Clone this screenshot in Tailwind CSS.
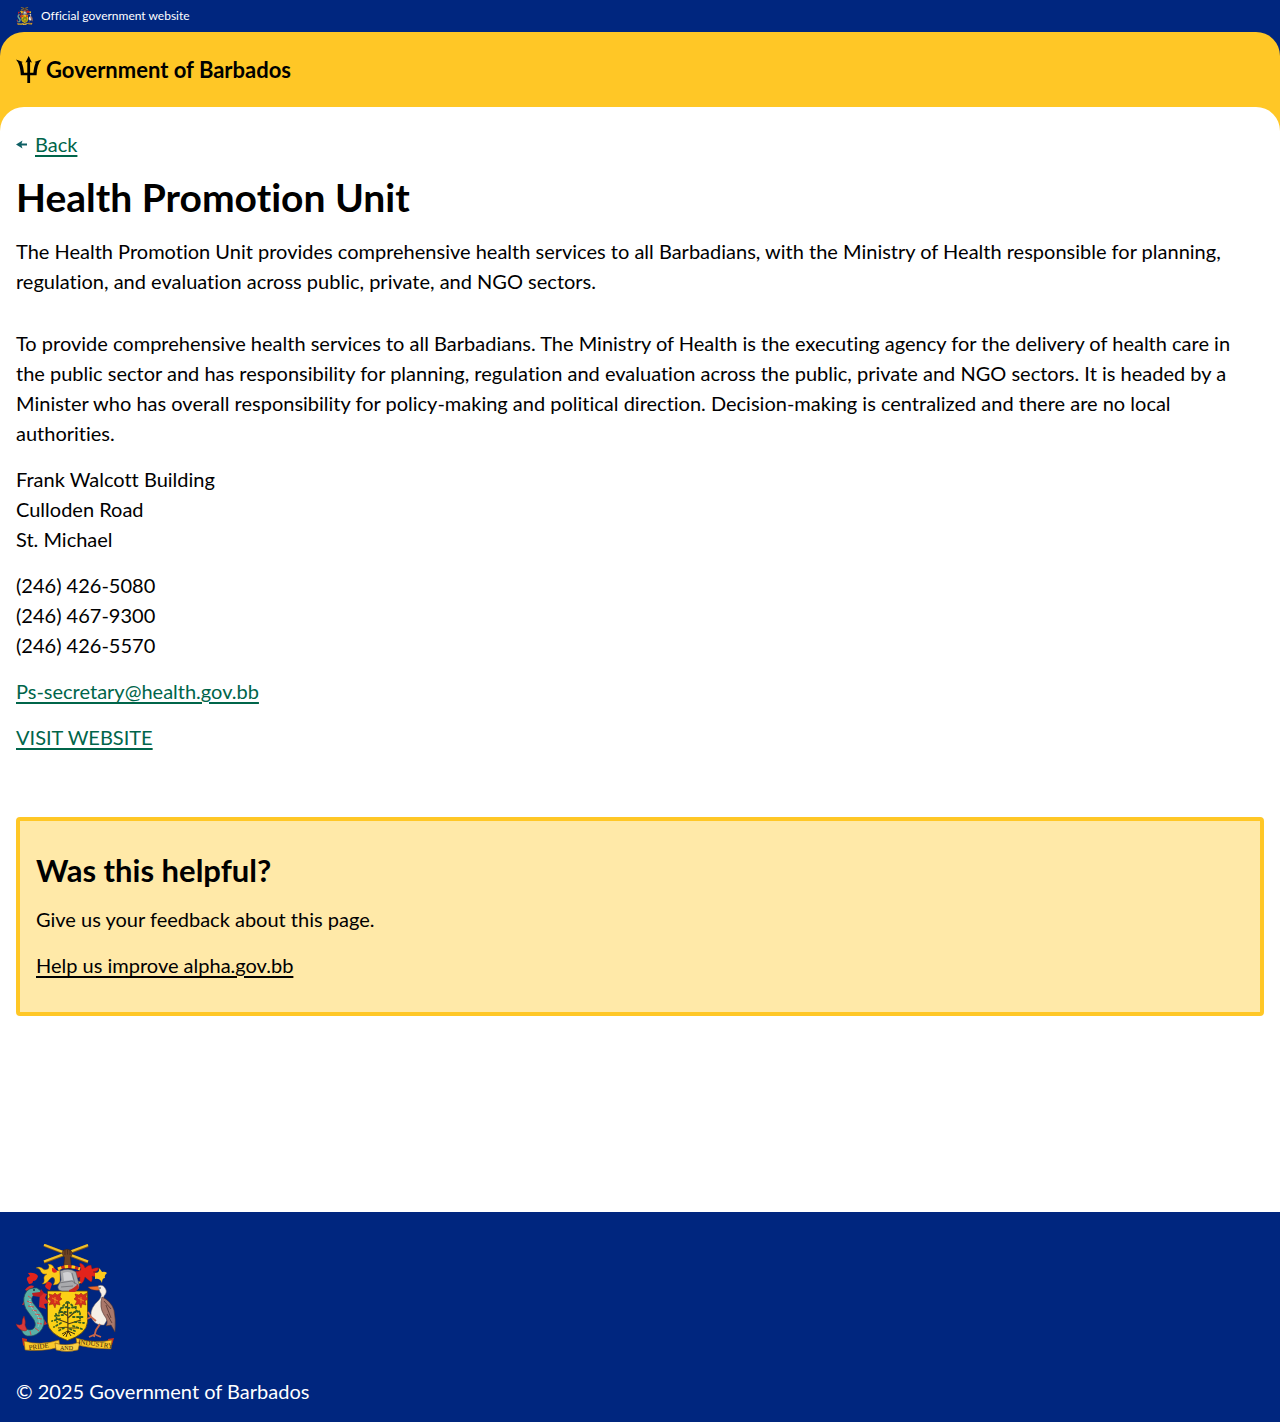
<!DOCTYPE html>
<html lang="en">
<head>
<meta charset="utf-8">
<meta name="viewport" content="width=device-width, initial-scale=1">
<title>Health Promotion Unit - Government of Barbados</title>
<script src="https://cdn.jsdelivr.net/npm/@tailwindcss/browser@4"></script>
</head>
<body class="flex min-h-screen flex-col bg-white font-[Lato,sans-serif] text-xl leading-[30px] text-black [font-variant-ligatures:none]">

<!-- Coat of arms, shared by the top bar and the footer -->
<svg class="hidden" aria-hidden="true">
  <symbol id="crest" viewBox="0 0 100 108">
    <!-- crossed cane and arm -->
    <path d="M28 18 72 1.500M28 1 72 18" stroke="#8a5a12" stroke-width="3"/>
    <path d="M28 17.500 72 1M28 .8 72 17.500" stroke="#eec02c" stroke-width="2"/>
    <path d="M47 6.500q4-3 8 0l1.500 3-2 4 1 11h-8l1-11-2.500-4z" fill="#6b4226" stroke="#2e1a10" stroke-width=".5"/>
    <path d="M49 6v5M51.500 5.500v5M54 6v5" stroke="#3b2114" stroke-width=".6"/>
    <!-- mantling -->
    <path d="M44 26q-4 2-6-2-1-4-6-4 2 3 0 5-4 2-6-1-3-2-6 0 4 0 5 4 2 3 6 2-4 2-3 5 1 3-2 5 5 0 7-4 3-4 5-2 2 3-1 7 5 0 7-3z" fill="#fcca1b" stroke="#8c5a0a" stroke-width=".4"/>
    <path d="M22 32q-3-4-10-3l2 3q-4 1-3 4l2 4q4 0 4-3 4 0 5-5z" fill="#e2231c"/>
    <path d="M31 38q3-1 5 2l-2 6q-4-1-5-4zM36 24q4 0 5 4-4 2-5-1z" fill="#e2231c"/>
    <path d="M60 27q5 1 5-3-2-3-1-5 4 1 5 5 3-3 6-3l1 4q5-2 7-1-1 4-6 4 5 0 6 4-4 1-7 0 1 4-1 6-4-3-6-5-1 5-4 7-2-3-1-7-3 2-5 0z" fill="#e2231c" stroke="#86160f" stroke-width=".4"/>
    <path d="M79 29q5 0 4-5 2 2 3 4 3-1 5 1-3 2-2 5-3 0-3 5-2-5-7-4z" fill="#fcca1b"/>
    <path d="M58 33q3 0 4 4l3 1-4 4-4-3z" fill="#fcca1b"/>
    <!-- shield -->
    <path d="M31.500 47h40v31q-1 12-20 18.500-19-6.500-20-18.500z" fill="#fcd116" stroke="#5a430b" stroke-width=".8"/>
    <!-- helmet and wreath -->
    <path d="M44 27q9-4 16 1l3 12q1 6-6 7H46q-5-1-4-5l3-6z" fill="#a9aaad" stroke="#4c4c50" stroke-width=".6"/>
    <path d="M47 29q5-2 8 0l2 7-9 1z" fill="#d0d1d3"/>
    <path d="m43 39 13-2 6 4M45 43l12-1M56 29l3 11" fill="none" stroke="#66666b" stroke-width=".7"/>
    <path d="M53 46q4-1 9-6l1 4-4 4h-6z" fill="#c82a20"/>
    <path d="M42 25q10-5 22 0" fill="none" stroke="#c9281d" stroke-width="3"/>
    <path d="M42 25q10-5 22 0" fill="none" stroke="#fcd116" stroke-width="3" stroke-dasharray="3.500 3.500"/>
    <!-- pride of Barbados flowers -->
    <g id="flower">
      <path d="m33 50 4 1 2-2 2 2 4-2-1 4 2 2-3 2 1 4-4-1-1 4-2-4-4 1 2-4-3-2 2-2z" fill="#d5301d" stroke="#7f190f" stroke-width=".4"/>
      <path d="M39 53v6M36 54l6 3" stroke="#f6a723" stroke-width=".7"/>
    </g>
    <use href="#flower" x="26"/>
    <!-- bearded fig tree -->
    <path d="M51.500 58 52 89M52 72l-9-6M52 74l9-8M52 79l-11-4M52 80l13-4M52 83l-10 1M52 84l11 0" fill="none" stroke="#4b3a16" stroke-width="1.200"/>
    <path d="m51 58-4 4M52 58l5 4M51 63l-6 1M52 64l8-1M50 68l-8 0M54 69l11-2M47 71l-8 1M57 73l10 0M44 75l-8 2M59 78l9 1M45 79l-7 4M57 82l9 3M48 84l-6 3M54 85l5 2M45 64l-2 5M59 63l3 6M40 70l1 8M64 69l0 8" fill="none" stroke="#365f21" stroke-width="1.800" stroke-linecap="round" stroke-dasharray="1.500 2.500"/>
    <path d="m52 87-6 3M52 87l-2 6M52 87l3 5M52 87l7 3M50 89l-3 3" fill="none" stroke="#3d2810" stroke-width="1"/>
    <!-- dolphin -->
    <path d="m24 48 7 2-2 4 4 5-5 1 2 5-7-2zM9 55l-3 6 5-1zM9 46q4-6 9-4l-4 6zM28 75l3 5-5 2z" fill="#d72a29"/>
    <path d="M9 50q3-7 12-6l4 3-1 3-6 1q-4 3-1 8l8 10q6 8 1 16-5 8-15 7Q6 91 5 83l3-1q4 6 9 3 4-3 1-9L10 65Q6 57 9 50z" fill="#59afa7" stroke="#224e57" stroke-width=".7"/>
    <path d="m12 52 3 2M11 57l5 2M12 62l6 1M16 66l5 1M19 70l5 1M21 74l5 1M21 79l5 1M19 84l4 3M14 87l1 4" fill="none" stroke="#d64a49" stroke-width="1"/>
    <path d="M14 55q-1 6 4 12 8 9 4 16" fill="none" stroke="#b9dfd2" stroke-width="1" stroke-dasharray="1 1"/>
    <path d="M9 87Q2 86 0 80q4 2 6 0 0-5 2-8 2 6 1 9l2 5z" fill="#d9383a" stroke="#85201d" stroke-width=".5"/>
    <path d="m16 49 8-1 1-3 3 4-4 4-7-1z" fill="#b91e21"/>
    <circle cx="18" cy="46" r="1" fill="#183639"/>
    <!-- pelican -->
    <path d="m72 43 12-1v4q-8 1-12-3z" fill="#ee6d2d" stroke="#8c3413" stroke-width=".4"/>
    <path d="M82 42q5-2 7 2 3 4-1 8-2 4 3 9l3 10-6 10q-10 1-13-9-1-8 8-16 4-5 1-8z" fill="#f5efe7" stroke="#7c6f68" stroke-width=".5"/>
    <path d="M86 53q9 4 12 13 2 9 1 22l-4-7-5 1q3-5-2-11-5-8-2-18z" fill="#a9786b" stroke="#4e302b" stroke-width=".6"/>
    <path d="m90 61 5 13M91 70l5 9M88 57l7 8" stroke="#5f3c36" stroke-width=".9"/>
    <circle cx="84" cy="44" r=".8" fill="#222"/>
    <path d="m80 77-5-4-3-5M75 73l-4 2M84 80l-4 6-2 7M80 90l-7 3M80 91l5 2" fill="none" stroke="#c8664a" stroke-width="1.800"/>
    <!-- motto ribbon -->
    <path d="m6 94 5 1-1 9-3-3zM98 94l-6 1 1 8 3-2z" fill="#cf301c"/>
    <path d="M8 97q17 5 35-1l1 7q-17 5-35 3zM60 94q18 6 36 2l-1 9q-19 0-34-4z" fill="#fbc82b" stroke="#86580d" stroke-width=".6"/>
    <path d="M39 99q11 4 25-1l-2 8q-11 3-22 0z" fill="#fbd044" stroke="#86580d" stroke-width=".6"/>
    <g font-family="Liberation Serif, serif" fill="#37270c" font-size="7">
      <text transform="translate(13 106) rotate(-7)">PRIDE</text>
      <text x="44" y="106" font-size="6">AND</text>
      <text transform="translate(62 100) rotate(7)">INDUSTRY</text>
    </g>
  </symbol>
</svg>

<div class="bg-[#00267f] text-white">
  <div class="flex h-8 items-center gap-2 px-4 text-xs">
    <svg class="h-[18px] w-[17px]" aria-hidden="true"><use href="#crest"/></svg>
    <span>Official government website</span>
  </div>
</div>

<div class="bg-[#00267f]">
  <header class="rounded-t-3xl bg-[#ffc726] py-6">
    <a href="#" class="flex items-center gap-1 px-4 text-[22px] leading-[27px] font-bold">
      <svg class="h-[27px] w-[26px]" viewBox="0 0 26 27" aria-hidden="true">
        <path d="M12.700 0 15.900 6.400 14.100 5.900V16.800h3.300c.3-3.600 1-7.200 2.400-10.400l-1.300-.4L25.400 3.500c-3.200 3.800-4.600 9-4.800 15.700h-6.500V27h-2.800v-7.800H4.800C4.600 12.500 3.200 7.300 0 3.500L6.900 6l-1.300.4C7 9.600 7.700 13.200 8 16.800h3.300V5.900l-1.800.5z"/>
      </svg>
      <span>Government of Barbados</span>
    </a>
  </header>
</div>

<div class="flex flex-1 flex-col bg-[#ffc726]">
<main class="flex-1 rounded-t-3xl bg-white px-4 pt-[22px] pb-[196px]">
  <a href="#" class="flex items-center gap-2 text-[#00654a]">
    <svg class="h-[9px] w-[11px]" viewBox="0 0 11 9" aria-hidden="true">
      <path d="M0 4.500 6.500.5 5.500 3.500H11v2H5.500l1 3z" fill="#0e5f64"/>
    </svg>
    <span class="underline decoration-2 underline-offset-3">Back</span>
  </a>

  <h1 class="my-4 text-[39px] leading-[45px] font-bold">Health Promotion Unit</h1>
  <p>The Health Promotion Unit provides comprehensive health services to all Barbadians, with the Ministry of Health responsible for planning, regulation, and evaluation across public, private, and NGO sectors.</p>

  <div class="mt-8 flex flex-col items-start gap-4">
    <p>To provide comprehensive health services to all Barbadians. The Ministry of Health is the executing agency for the delivery of health care in the public sector and has responsibility for planning, regulation and evaluation across the public, private and NGO sectors. It is headed by a Minister who has overall responsibility for policy-making and political direction. Decision-making is centralized and there are no local authorities.</p>
    <address class="not-italic">Frank Walcott Building<br>Culloden Road<br>St. Michael</address>
    <p>(246) 426-5080<br>(246) 467-9300<br>(246) 426-5570</p>
    <a href="mailto:Ps-secretary@health.gov.bb" class="text-[#00654a] underline decoration-2 underline-offset-3">Ps-secretary@health.gov.bb</a>
    <a href="#" class="text-[#00654a] underline decoration-2 underline-offset-3">VISIT WEBSITE</a>
  </div>

  <section class="mt-[65px] flex flex-col items-start gap-4 rounded-sm border-4 border-[#ffc726] bg-[#ffe9a8] px-4 pt-[31px] pb-8">
    <h2 class="text-[31px] leading-9 font-bold">Was this helpful?</h2>
    <p>Give us your feedback about this page.</p>
    <a href="#" class="underline decoration-2 underline-offset-3">Help us improve alpha.gov.bb</a>
  </section>
</main>
</div>

<footer class="flex flex-col gap-6 bg-[#00267f] px-4 pt-8 pb-4 text-white">
  <svg class="h-[108px] w-[100px]" role="img" aria-label="Coat of arms of Barbados"><use href="#crest"/></svg>
  <p>© 2025 Government of Barbados</p>
</footer>
</body>
</html>
